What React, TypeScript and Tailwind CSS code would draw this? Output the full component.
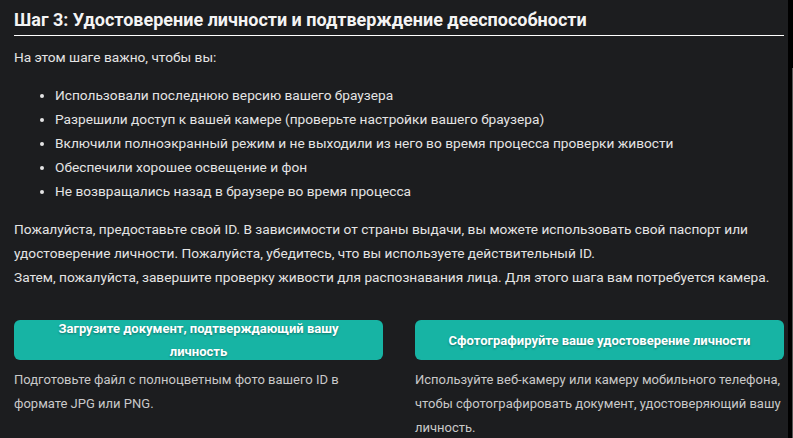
const bullets = [
  "Использовали последнюю версию вашего браузера",
  "Разрешили доступ к вашей камере (проверьте настройки вашего браузера)",
  "Включили полноэкранный режим и не выходили из него во время процесса проверки живости",
  "Обеспечили хорошее освещение и фон",
  "Не возвращались назад в браузере во время процесса",
];

function Option({ title, text }: { title: string; text: string }) {
  return (
    <div className="flex flex-col">
      <button className="flex h-[40px] items-center justify-center rounded-[6px] bg-[#17b4a4] px-6 text-center text-[13px] font-bold leading-[23px] text-white [text-shadow:0_1px_2px_rgba(0,0,0,0.35)]">
        {title}
      </button>
      <p className="mt-[8px] text-[13px] leading-[24px] text-[#c9c9c9]">{text}</p>
    </div>
  );
}

export default function App() {
  return (
    <div className="flex h-[438px] w-[793px] overflow-hidden bg-black font-['Roboto',sans-serif]">
      <div className="w-[788px] bg-[#1c1d1f] px-[14px] pr-[4px]">
        <h2 className="border-b border-white pb-[2px] pt-[6px] text-[18px] font-bold leading-[27px] text-[#f4f4f4]">
          Шаг 3: Удостоверение личности и подтверждение дееспособности
        </h2>
        <div className="text-[13.7px] leading-[24px] text-[#e4e4e4]">
          <p className="mt-[9px]">На этом шаге важно, чтобы вы:</p>
          <ul className="mt-[14px] list-disc pl-[41px]">
            {bullets.map((b) => (
              <li key={b}>{b}</li>
            ))}
          </ul>
          <p className="mt-[14px]">
            Пожалуйста, предоставьте свой ID. В зависимости от страны выдачи, вы можете использовать свой паспорт или
            удостоверение личности. Пожалуйста, убедитесь, что вы используете действительный ID.
            <br />
            Затем, пожалуйста, завершите проверку живости для распознавания лица. Для этого шага вам потребуется камера.
          </p>
        </div>
        <div className="mt-[31px] grid grid-cols-2 gap-[32px]">
          <Option
            title="Загрузите документ, подтверждающий вашу личность"
            text="Подготовьте файл с полноцветным фото вашего ID в формате JPG или PNG."
          />
          <Option
            title="Сфотографируйте ваше удостоверение личности"
            text="Используйте веб-камеру или камеру мобильного телефона, чтобы сфотографировать документ, удостоверяющий вашу личность."
          />
        </div>
      </div>
      <div className="flex w-[5px] justify-end bg-black">
        <div className="mt-[68px] h-[370px] w-[1px] bg-[#555]" />
      </div>
    </div>
  );
}
